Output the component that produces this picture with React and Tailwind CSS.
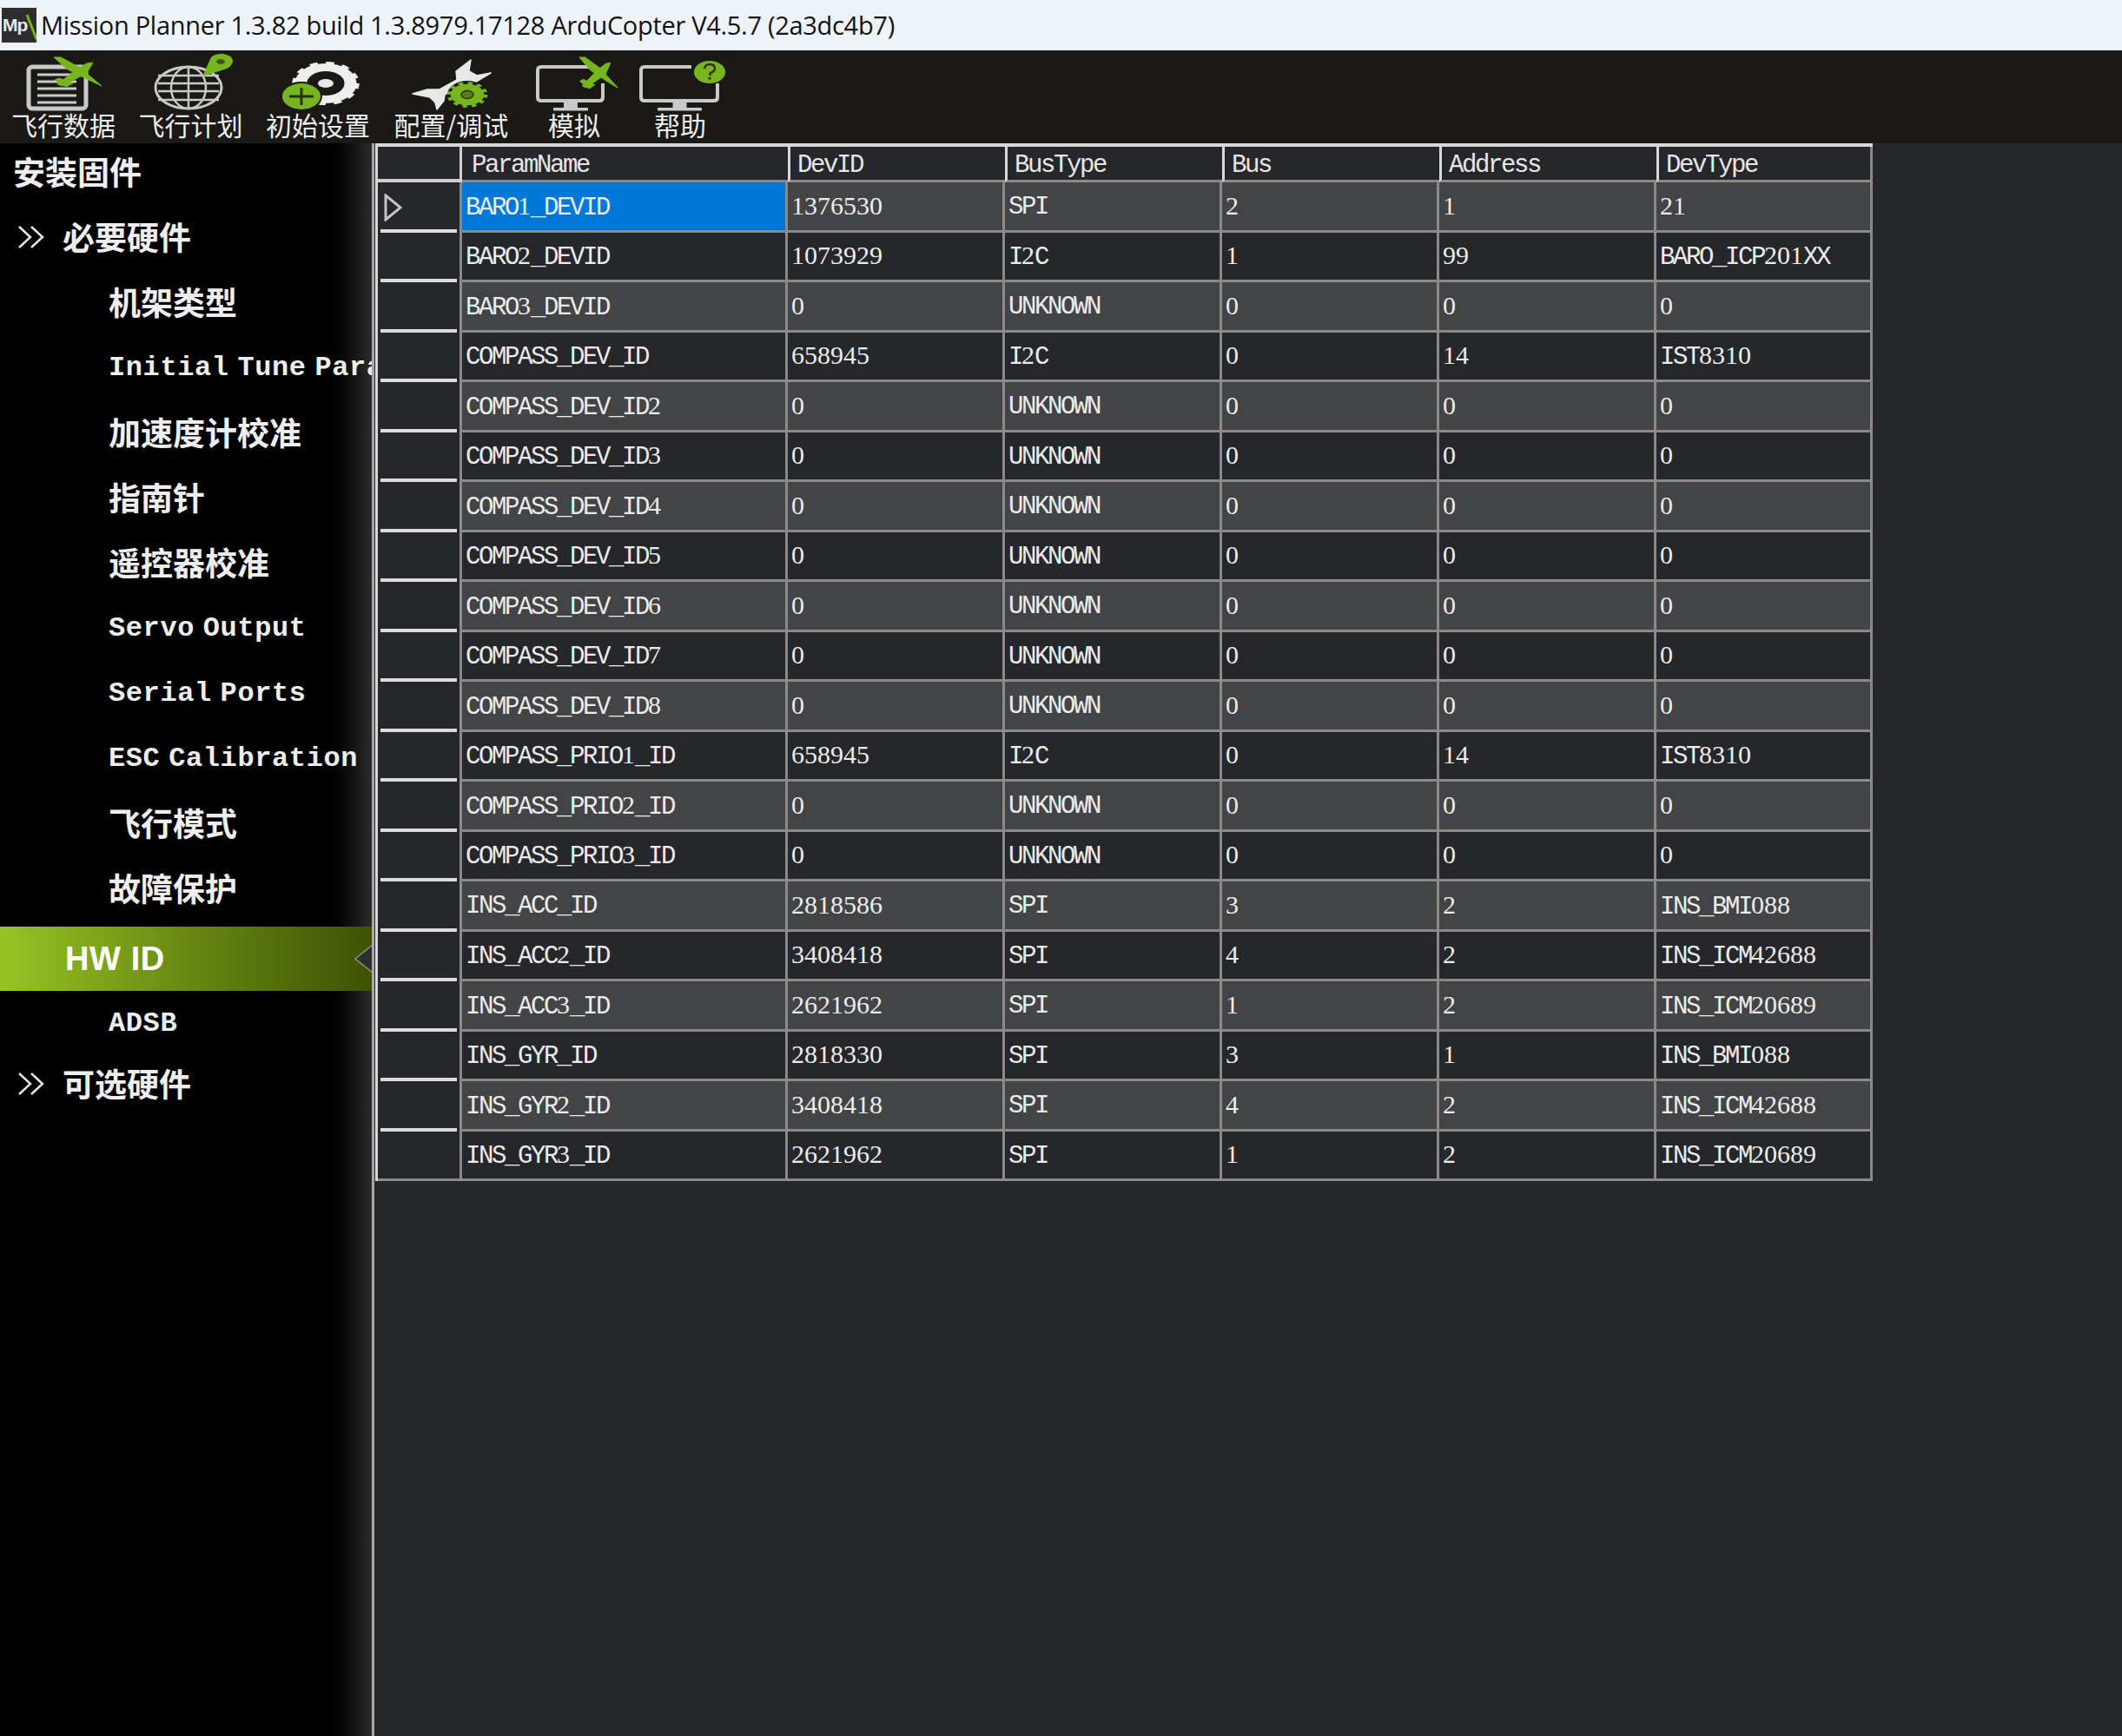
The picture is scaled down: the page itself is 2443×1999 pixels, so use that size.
import React from 'react';

const CJK = "font-['Noto_Sans_CJK_SC',sans-serif]";
const MONO = "font-['Liberation_Mono','Noto_Sans_CJK_SC',monospace]";
const GREEN = '#78b41e';
const GREY = '#c9c9c9';

const COLUMNS = ['ParamName', 'DevID', 'BusType', 'Bus', 'Address', 'DevType'];
const HEAD_WIDTHS = ['w-[375px]', 'w-[250px]', 'w-[250px]', 'w-[250px]', 'w-[250px]', 'w-[249px]'];
const CELL_WIDTHS = ['w-[375px]', 'w-[250px]', 'w-[250px]', 'w-[250px]', 'w-[250px]', 'w-[249px]'];

const ROWS = [
  ['BARO1_DEVID', '1376530', 'SPI', '2', '1', '21'],
  ['BARO2_DEVID', '1073929', 'I2C', '1', '99', 'BARO_ICP201XX'],
  ['BARO3_DEVID', '0', 'UNKNOWN', '0', '0', '0'],
  ['COMPASS_DEV_ID', '658945', 'I2C', '0', '14', 'IST8310'],
  ['COMPASS_DEV_ID2', '0', 'UNKNOWN', '0', '0', '0'],
  ['COMPASS_DEV_ID3', '0', 'UNKNOWN', '0', '0', '0'],
  ['COMPASS_DEV_ID4', '0', 'UNKNOWN', '0', '0', '0'],
  ['COMPASS_DEV_ID5', '0', 'UNKNOWN', '0', '0', '0'],
  ['COMPASS_DEV_ID6', '0', 'UNKNOWN', '0', '0', '0'],
  ['COMPASS_DEV_ID7', '0', 'UNKNOWN', '0', '0', '0'],
  ['COMPASS_DEV_ID8', '0', 'UNKNOWN', '0', '0', '0'],
  ['COMPASS_PRIO1_ID', '658945', 'I2C', '0', '14', 'IST8310'],
  ['COMPASS_PRIO2_ID', '0', 'UNKNOWN', '0', '0', '0'],
  ['COMPASS_PRIO3_ID', '0', 'UNKNOWN', '0', '0', '0'],
  ['INS_ACC_ID', '2818586', 'SPI', '3', '2', 'INS_BMI088'],
  ['INS_ACC2_ID', '3408418', 'SPI', '4', '2', 'INS_ICM42688'],
  ['INS_ACC3_ID', '2621962', 'SPI', '1', '2', 'INS_ICM20689'],
  ['INS_GYR_ID', '2818330', 'SPI', '3', '1', 'INS_BMI088'],
  ['INS_GYR2_ID', '3408418', 'SPI', '4', '2', 'INS_ICM42688'],
  ['INS_GYR3_ID', '2621962', 'SPI', '1', '2', 'INS_ICM20689'],
];

const SIDE_ITEMS = [
  { label: '安装固件', kind: 'top' },
  { label: '必要硬件', kind: 'group' },
  { label: '机架类型', kind: 'sub' },
  { label: 'Initial Tune Para', kind: 'sub', latin: true },
  { label: '加速度计校准', kind: 'sub' },
  { label: '指南针', kind: 'sub' },
  { label: '遥控器校准', kind: 'sub' },
  { label: 'Servo Output', kind: 'sub', latin: true },
  { label: 'Serial Ports', kind: 'sub', latin: true },
  { label: 'ESC Calibration', kind: 'sub', latin: true },
  { label: '飞行模式', kind: 'sub' },
  { label: '故障保护', kind: 'sub' },
  { label: 'HW ID', kind: 'active' },
  { label: 'ADSB', kind: 'sub', latin: true },
  { label: '可选硬件', kind: 'group', last: true },
];

// wing, fuselage and tail of the little green plane, drawn at the first icon's place
function Plane({ transform }) {
  return (
    <g transform={transform} fill={GREEN} stroke={GREEN} strokeWidth="1" strokeLinejoin="round">
      <path d="M62 66 L70 66 L92 78 L117 99 L98 90 L78 80 Z" />
      <path d="M107 72 L100 84 L72 99 L66 97 L88 80 L100 73 Z" />
      <path d="M63 92 L68 90 L84 96 L76 100 Z" />
    </g>
  );
}

function GearTeeth({ cx, cy, rx, ry, r, color, teeth }) {
  const ring = r - 5;
  const circ = 2 * Math.PI * (r - 1);
  return (
    <g transform={`translate(${cx} ${cy}) scale(${rx / r} ${ry / r})`}>
      <circle r={ring} fill="none" stroke={color} strokeWidth={r * 0.38} />
      <circle r={r - 1} fill="none" stroke={color} strokeWidth="4" strokeDasharray={`${circ / teeth / 2} ${circ / teeth / 2}`} />
    </g>
  );
}

function DocIcon() {
  return (
    <>
      <rect x="33" y="77" width="66" height="48" rx="4" fill="none" stroke={GREY} strokeWidth="5" />
      {[86, 94, 102, 110, 118].map((y) => (
        <line key={y} x1="43" x2="88" y1={y} y2={y} stroke={GREY} strokeWidth="3" />
      ))}
      <Plane />
    </>
  );
}

function GlobeIcon() {
  return (
    <>
      <ellipse cx="217" cy="101" rx="38" ry="24" fill="none" stroke={GREY} strokeWidth="3" />
      <ellipse cx="217" cy="101" rx="20" ry="24" fill="none" stroke={GREY} strokeWidth="2.5" />
      <line x1="217" x2="217" y1="77" y2="125" stroke={GREY} strokeWidth="2.5" />
      {[87, 96, 105, 115].map((y) => (
        <line key={y} x1="182" x2="252" y1={y} y2={y} stroke={GREY} strokeWidth="2.5" />
      ))}
      <path d="M233 88 L243 66 Q247 62 255 62 Q268 63 268 71 Q266 78 258 80 Z" fill={GREEN} />
      <ellipse cx="254" cy="71" rx="5" ry="3" fill="#3c5a10" />
    </>
  );
}

function GearIcon() {
  return (
    <>
      <GearTeeth cx={375} cy={96} rx={37} ry={24} r={22} color="#eeeeee" teeth={12} />
      <ellipse cx="375" cy="96" rx="9" ry="5" fill="#e8e8e8" />
      <ellipse cx="347" cy="111" rx="24" ry="17" fill="#1b1916" />
      <ellipse cx="347" cy="111" rx="22" ry="15" fill={GREEN} />
      <path d="M333 111 H361 M347 101 V121" stroke="#24300c" strokeWidth="3" />
    </>
  );
}

function WrenchIcon() {
  return (
    <>
      <path d="M542 69 L525 82 L526 92 L506 103 L492 103 L475 108 L495 112 L501 118 L503 126 L511 116 L512 109 L531 98 L545 96 L565 84 L549 87 L540 82 Z" fill="#e8e8e8" stroke="#e8e8e8" strokeWidth="1.5" strokeLinejoin="round" />
      <ellipse cx="538" cy="109" rx="23" ry="16" fill="#1b1916" />
      <ellipse cx="538" cy="109" rx="18" ry="12" fill={GREEN} />
      <GearTeeth cx={538} cy={109} rx={22} ry={14} r={16} color={GREEN} teeth={12} />
      <ellipse cx="538" cy="109" rx="7" ry="4.5" fill="#5b7d1c" stroke="#2a3510" strokeWidth="1.5" />
    </>
  );
}

function MonitorIcon({ x1, x2, baseX1, baseX2, gap }) {
  const neck = (baseX1 + baseX2) / 2;
  return (
    <>
      <path d={`M${gap} 77 H${x1 + 4} Q${x1} 77 ${x1} 81 V112 Q${x1} 116 ${x1 + 4} 116 H${x2 - 4} Q${x2} 116 ${x2} 112 V96`} fill="none" stroke={GREY} strokeWidth="4" />
      <rect x={neck - 8} y="117" width="16" height="8" fill={GREY} />
      <rect x={baseX1} y="124" width={baseX2 - baseX1} height="3.5" rx="1" fill={GREY} />
    </>
  );
}

function SimIcon() {
  return (
    <>
      <MonitorIcon x1={619} x2={694} baseX1={637} baseX2={677} gap={678} />
      <Plane transform="translate(617.4 -4) scale(0.8 1.06)" />
    </>
  );
}

function HelpIcon() {
  return (
    <>
      <MonitorIcon x1={738} x2={826} baseX1={757} baseX2={808} gap={796} />
      <ellipse cx="817" cy="83" rx="18" ry="13" fill={GREEN} />
      <path d="M811 79 Q812 74 817 74 Q823 74 823 79 Q823 82 818 84 L817 87" fill="none" stroke="#2a3510" strokeWidth="2.5" />
      <rect x="815.5" y="89" width="3" height="2.5" fill="#2a3510" />
    </>
  );
}

const TOOLS = [
  { label: '飞行数据', x: 0, w: 146, Icon: DocIcon },
  { label: '飞行计划', x: 146, w: 147, Icon: GlobeIcon },
  { label: '初始设置', x: 293, w: 146, Icon: GearIcon },
  { label: '配置/调试', x: 439, w: 161, Icon: WrenchIcon },
  { label: '模拟', x: 600, w: 122, Icon: SimIcon },
  { label: '帮助', x: 722, w: 122, Icon: HelpIcon },
];

function Chevrons() {
  return (
    <svg width="32" height="30" viewBox="0 0 32 30" className="shrink-0" fill="none" stroke="#e6e6e6" strokeWidth="2.5">
      <path d="M2 3 L15 15 L2 27" />
      <path d="M16 3 L29 15 L16 27" />
    </svg>
  );
}

// digits read closer to the old bitmap font in a serif, at the same advance as the mono letters
function CellText({ text }) {
  return text.split(/(\d+)/).map((part, i) =>
    /^\d+$/.test(part) ? (
      <span key={i} className="font-['Liberation_Serif',serif] text-[30px] leading-none tracking-normal">{part}</span>
    ) : (
      <span key={i}>{part}</span>
    )
  );
}

function SideItem({ item }) {
  if (item.kind === 'active') {
    return (
      <div className="relative mt-[7px] mb-[-1px] flex h-[74px] items-center bg-linear-to-r from-[#97c424] to-[#3f5205] pl-[75px]">
        <span className="font-['Liberation_Sans',sans-serif] text-[38px] font-bold tracking-[0.6px] text-white">{item.label}</span>
        <svg width="22" height="34" viewBox="0 0 22 34" className="absolute right-[-2px] top-[20px]">
          <path d="M1 17 L21 1 V33 Z" fill="#2d2e2e" stroke="#8b8f80" strokeWidth="1.5" />
        </svg>
      </div>
    );
  }
  if (item.kind === 'top') {
    return (
      <div className={`flex h-[75px] items-center pl-[15px] text-[37px] font-bold text-[#eeeeee] ${CJK}`}>{item.label}</div>
    );
  }
  if (item.kind === 'group') {
    return (
      <div className={`flex h-[75px] items-center gap-[20px] pl-[20px] text-[37px] font-bold text-[#eeeeee] ${CJK} ${item.last ? '-mt-[5px]' : ''}`}>
        <Chevrons />
        <span>{item.label}</span>
      </div>
    );
  }
  if (item.latin) {
    return (
      <div className={`flex h-[75px] items-center pt-[3px] pl-[125px] text-[32px] font-bold tracking-[0.6px] [word-spacing:-10px] whitespace-nowrap text-[#eeeeee] ${MONO}`}>{item.label}</div>
    );
  }
  return (
    <div className={`flex h-[75px] items-center pl-[125px] text-[37px] font-bold text-[#eeeeee] ${CJK}`}>{item.label}</div>
  );
}

function TableHeader() {
  return (
    <div className="flex h-[45px] border-t-[4px] border-[#d8d8d8] bg-[#26272a]">
      <div className="w-[97px] shrink-0 border-r-[3px] border-b-[4px] border-[#d0d0d0]" />
      {COLUMNS.map((name, i) => (
        <div
          key={name}
          className={`flex items-center border-b-[3px] border-b-[#8a8a8a] pt-[5px] ${HEAD_WIDTHS[i]} ${i === 0 ? 'pl-[11px]' : 'border-l-[3px] border-l-[#d8d8d8] pl-[8px]'} ${i === 5 ? 'border-r-[3px] border-r-[#8a8a8a]' : ''}`}
        >
          <span className={`text-[29px] leading-[34px] tracking-[-2.4px] text-[#e6e6e6] ${MONO}`}>{name}</span>
        </div>
      ))}
    </div>
  );
}

function TableRow({ row, index }) {
  const shade = index % 2 === 0 ? 'bg-[#434446]' : 'bg-[#26272a]';
  const isLast = index === ROWS.length - 1;
  return (
    <div className="flex h-[57.5px]">
      <div className={`relative flex w-[97px] shrink-0 items-end border-r-[3px] border-[#8a8a8a] bg-[#26272a] px-[3px] ${isLast ? 'border-b-[3px]' : ''}`}>
        {index === 0 && (
          <svg width="22" height="32" viewBox="0 0 22 32" className="absolute left-[7px] top-[13px]">
            <path d="M2 2 L19 16 L2 30 Z" fill="none" stroke="#c4c4c4" strokeWidth="3" />
          </svg>
        )}
        {!isLast && <div className="h-[4px] w-full bg-[#dcdcdc]" />}
      </div>
      {row.map((cell, c) => (
        <div
          key={c}
          className={`flex items-center border-r-[3px] border-b-[3px] border-[#8a8a8a] pt-[4px] pl-[4px] ${CELL_WIDTHS[c]} ${index === 0 && c === 0 ? 'bg-[#0078d7]' : shade}`}
        >
          <span className={`text-[29px] leading-[34px] tracking-[-2.4px] whitespace-nowrap text-[#ececec] ${MONO}`}>
            <CellText text={cell} />
          </span>
        </div>
      ))}
    </div>
  );
}

export default function App() {
  return (
    <div className="flex h-[1999px] w-[2443px] flex-col overflow-hidden bg-[#26272a]">
      {/* Title bar */}
      <header className="flex h-[58px] shrink-0 items-center bg-[#eef3f8] pl-[2px]">
        <div className="relative flex h-[40px] w-[40px] items-center overflow-hidden bg-[#2e2e2e] pl-[1px]">
          <span className="font-['Liberation_Sans',sans-serif] text-[21px] font-bold tracking-[-1px] text-[#e8e8e8]">Mp</span>
          <svg width="40" height="40" viewBox="0 0 40 40" className="absolute left-0 top-0">
            <path d="M29 8 L40 36" stroke={GREEN} strokeWidth="3" />
          </svg>
        </div>
        <span className="ml-[5px] whitespace-nowrap font-['Open_Sans',sans-serif] text-[29px] tracking-[-0.3px] text-[#111111]">
          Mission Planner 1.3.82 build 1.3.8979.17128 ArduCopter V4.5.7 (2a3dc4b7)
        </span>
      </header>

      {/* Toolbar */}
      <nav className="flex h-[107px] shrink-0 bg-[#1b1916]">
        {TOOLS.map(({ label, x, w, Icon }) => (
          <div key={label} className="flex shrink-0 flex-col items-center" style={{ width: w }}>
            <svg width={w} height="72" viewBox={`${x} 58 ${w} 72`} className="shrink-0">
              <Icon />
            </svg>
            <span className={`text-[30px] leading-[26px] whitespace-nowrap text-[#eeeeee] ${CJK}`}>{label}</span>
          </div>
        ))}
      </nav>

      <div className="flex min-h-0 flex-1">
        {/* Sidebar */}
        <aside className="w-[428px] shrink-0 overflow-hidden bg-linear-to-r from-black from-[86%] to-[#2c2c2e]">
          <div className="-mt-[5px]">
            {SIDE_ITEMS.map((item) => (
              <SideItem key={item.label} item={item} />
            ))}
          </div>
        </aside>
        <div className="w-[3px] shrink-0 bg-[#a8a8a8]" />

        {/* Hardware ID table */}
        <main className="min-w-0 flex-1 pl-[1px]">
          <div className="w-fit border-l-[3px] border-l-[#d8d8d8]">
            <TableHeader />
            {ROWS.map((row, i) => (
              <TableRow key={row[0]} row={row} index={i} />
            ))}
          </div>
        </main>
      </div>
    </div>
  );
}
